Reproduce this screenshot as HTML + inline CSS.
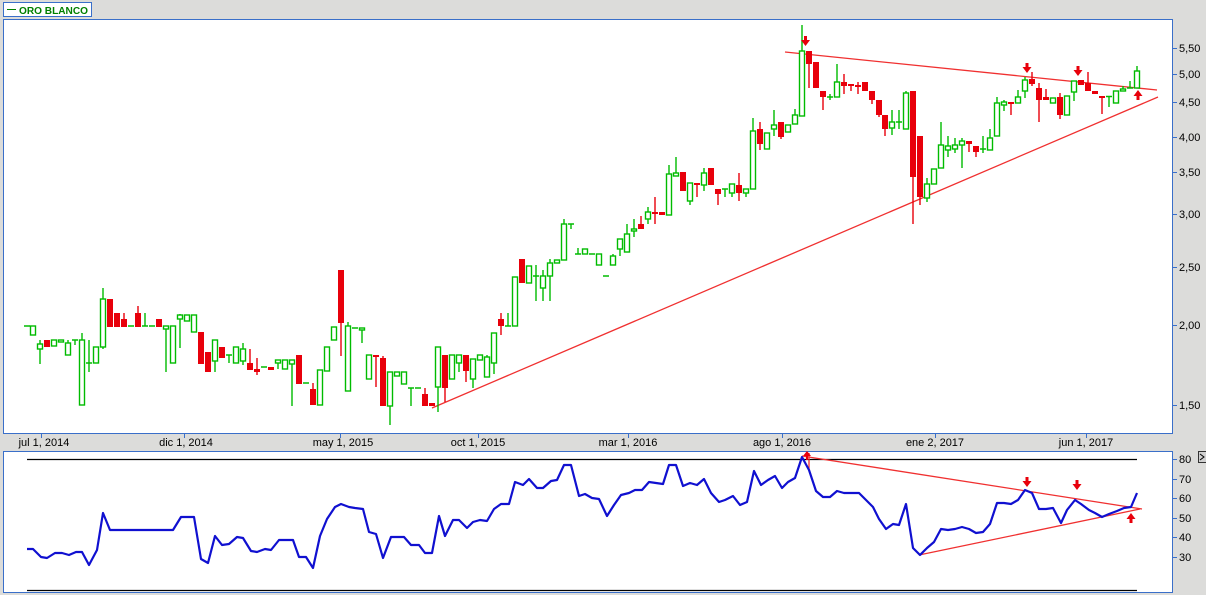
<!DOCTYPE html>
<html><head><meta charset="utf-8"><style>
html,body{margin:0;padding:0;background:#dcdcda;}
svg{display:block;font-family:"Liberation Sans",sans-serif;}
</style></head><body>
<svg width="1206" height="595" viewBox="0 0 1206 595" xmlns="http://www.w3.org/2000/svg">
<rect width="1206" height="595" fill="#dcdcda"/>
<!-- legend -->
<rect x="3.5" y="2.5" width="88" height="14" fill="#fff" stroke="#3a6fc9"/>
<line x1="7" y1="9.5" x2="16" y2="9.5" stroke="#008000" stroke-width="1"/>
<text x="19" y="14" font-size="10.5" font-weight="bold" fill="#008000" textLength="69" lengthAdjust="spacingAndGlyphs">ORO BLANCO</text>
<!-- main panel -->
<rect x="3.5" y="19.5" width="1169" height="414" fill="#fff" stroke="#3a6fc9"/>
<g stroke="#3a6fc9" stroke-width="1">
<path d="M1173 48.5h4M1173 74.5h4M1173 102.5h4M1173 137.5h4M1173 172.5h4M1173 214.5h4M1173 267.5h4M1173 325.5h4M1173 405.5h4"/>
<path d="M41.5 434v4M184.5 434v4M340.5 434v4M478.5 434v4M628.5 434v4M782.5 434v4M935.5 434v4M1086.5 434v4"/>
<path d="M1173 459.5h4M1173 479.5h4M1173 498.5h4M1173 518.5h4M1173 537.5h4M1173 557.5h4"/>
</g>
<g font-size="11" fill="#000">
<text x="1179" y="52">5,50</text><text x="1179" y="78">5,00</text><text x="1179" y="106">4,50</text>
<text x="1179" y="141">4,00</text><text x="1179" y="176">3,50</text><text x="1179" y="218">3,00</text>
<text x="1179" y="271">2,50</text><text x="1179" y="329">2,00</text><text x="1179" y="409">1,50</text>
<text x="1179" y="463">80</text><text x="1179" y="483">70</text><text x="1179" y="502">60</text>
<text x="1179" y="522">50</text><text x="1179" y="541">40</text><text x="1179" y="561">30</text>
<g text-anchor="middle">
<text x="44" y="446">jul 1, 2014</text><text x="186" y="446">dic 1, 2014</text><text x="343" y="446">may 1, 2015</text>
<text x="478" y="446">oct 1, 2015</text><text x="628" y="446">mar 1, 2016</text><text x="782" y="446">ago 1, 2016</text>
<text x="935" y="446">ene 2, 2017</text><text x="1086" y="446">jun 1, 2017</text>
</g></g>
<!-- trend lines -->
<g stroke="#f03030" stroke-width="1.3" fill="none">
<path d="M785 52L1157 90"/><path d="M432 408L1158 97"/>
</g>
<!-- green candles -->
<g stroke="#00bb00" stroke-width="1.4" fill="none">
<path d="M40 340V364M68 340V355M75 340V345M82 333V405M89 340V372M103 288V349M145 313V326M166 326V372M180 314V348M215 340V372M229 355V363M243 343V365M278 360V369M292 360V406M348 322V391M362 328V343M390 372V425M411 388V406M438 347V412M459 355V372M473 359V388M487 355V377M494 333V374M508 313V326M536 265V301M543 270V301M550 259V301M564 219V260M571 224V229M578 248V254M613 254V265M620 239V256M627 224V252M634 219V237M648 207V224M669 165V215M676 157V176M690 183V205M704 168V191M725 189V197M732 184V197M746 189V197M753 118V189M774 110V136M795 109V124M802 25V116M830 94V100M837 64V97M892 110V135M899 110V129M906 91V129M927 178V202M941 122V168M948 136V157M955 138V153M962 138V168M983 136V153M990 129V150M997 97V136M1004 100V111M1018 90V103M1025 77V98M1074 81V101M1109 96V107M1123 86V91M1130 81V88M1137 66V88"/>
<path d="M24 326h6M72 340h6M86 363h6M128 326h6M142 326h6M149 326h6M226 355h6M261 367h6M303 383h6M352 328h6M408 388h6M415 388h6M505 326h6M533 276h6M568 224h6M575 254h6M589 254h6M603 276h6M722 189h6M827 97h6M896 122h6M980 149h6M1106 96.5h6M1127 88h6"/>
</g>
<g stroke="#00bb00" stroke-width="1.4" fill="#fff">
<rect x="30.5" y="326" width="5" height="9"/><rect x="37.5" y="344" width="5" height="5"/><rect x="51.5" y="340" width="5" height="6"/><rect x="58.5" y="340" width="5" height="2"/><rect x="65.5" y="343" width="5" height="12"/><rect x="79.5" y="340" width="5" height="65"/><rect x="93.5" y="347" width="5" height="16"/><rect x="100.5" y="299" width="5" height="48"/><rect x="163.5" y="326" width="5" height="3"/><rect x="170.5" y="326" width="5" height="37"/><rect x="177.5" y="315" width="5" height="4"/><rect x="184.5" y="315" width="5" height="6"/><rect x="191.5" y="315" width="5" height="17"/><rect x="212.5" y="340" width="5" height="21"/><rect x="233.5" y="347" width="5" height="16"/><rect x="240.5" y="349" width="5" height="12"/><rect x="275.5" y="360" width="5" height="3"/><rect x="282.5" y="360" width="5" height="9"/><rect x="289.5" y="360" width="5" height="4"/><rect x="317.5" y="370" width="5" height="35"/><rect x="324.5" y="347" width="5" height="24"/><rect x="331.5" y="327" width="5" height="13"/><rect x="345.5" y="326" width="5" height="65"/><rect x="359.5" y="328" width="5" height="2"/><rect x="366.5" y="355" width="5" height="24"/><rect x="387.5" y="372" width="5" height="34"/><rect x="394.5" y="372" width="5" height="4"/><rect x="401.5" y="372" width="5" height="12"/><rect x="435.5" y="347" width="5" height="40"/><rect x="449.5" y="355" width="5" height="24"/><rect x="456.5" y="355" width="5" height="8"/><rect x="470.5" y="359" width="5" height="20"/><rect x="477.5" y="355" width="5" height="5"/><rect x="484.5" y="357" width="5" height="20"/><rect x="491.5" y="333" width="5" height="30"/><rect x="512.5" y="277" width="5" height="49"/><rect x="526.5" y="266" width="5" height="17"/><rect x="540.5" y="276" width="5" height="12"/><rect x="547.5" y="263" width="5" height="13"/><rect x="554.5" y="260" width="5" height="3"/><rect x="561.5" y="224" width="5" height="36"/><rect x="582.5" y="249" width="5" height="5"/><rect x="596.5" y="254" width="5" height="11"/><rect x="610.5" y="256" width="5" height="9"/><rect x="617.5" y="239" width="5" height="10"/><rect x="624.5" y="234" width="5" height="18"/><rect x="631.5" y="229" width="5" height="2"/><rect x="645.5" y="212" width="5" height="7"/><rect x="666.5" y="174" width="5" height="41"/><rect x="673.5" y="173" width="5" height="3"/><rect x="687.5" y="183" width="5" height="18"/><rect x="701.5" y="173" width="5" height="12"/><rect x="729.5" y="184" width="5" height="9"/><rect x="743.5" y="189" width="5" height="4"/><rect x="750.5" y="131" width="5" height="58"/><rect x="764.5" y="133" width="5" height="16"/><rect x="771.5" y="125" width="5" height="4"/><rect x="785.5" y="125" width="5" height="7"/><rect x="792.5" y="115" width="5" height="9"/><rect x="799.5" y="51" width="5" height="65"/><rect x="834.5" y="82" width="5" height="15"/><rect x="889.5" y="122" width="5" height="6"/><rect x="903.5" y="93" width="5" height="36"/><rect x="924.5" y="184" width="5" height="14"/><rect x="931.5" y="169" width="5" height="15"/><rect x="938.5" y="145" width="5" height="23"/><rect x="945.5" y="146" width="5" height="4"/><rect x="952.5" y="145" width="5" height="4"/><rect x="959.5" y="141" width="5" height="4"/><rect x="987.5" y="138" width="5" height="12"/><rect x="994.5" y="103" width="5" height="33"/><rect x="1001.5" y="102" width="5" height="3"/><rect x="1015.5" y="97" width="5" height="6"/><rect x="1022.5" y="80" width="5" height="11"/><rect x="1050.5" y="98" width="5" height="5"/><rect x="1064.5" y="96" width="5" height="19"/><rect x="1071.5" y="81" width="5" height="11"/><rect x="1113.5" y="91" width="5" height="12"/><rect x="1120.5" y="89" width="5" height="2"/><rect x="1134.5" y="71" width="5" height="17"/>
</g>
<!-- red candles -->
<g stroke="#e8000b" stroke-width="1.4" fill="none">
<path d="M124 313V319M138 306V313M250 349V363M257 358V375M313 383V389M341 323V356M376 356V387M383 356V358M425 388V394M445 388V402M466 371V382M501 313V335M641 216V224M655 197V224M697 185V197M718 194V205M739 173V201M760 122V150M781 137V139M809 64V88M823 97V110M844 74V94M851 86V91M858 82V94M872 100V104M879 115V117M885 129V136M913 177V224M920 197V205M969 144V152M976 152V157M1011 104V115M1032 72V86M1039 83V122M1046 89V97M1060 93V119M1088 72V83M1102 98V114"/>
</g>
<g fill="#e8000b">
<rect x="44" y="340" width="6" height="7"/><rect x="107" y="299" width="6" height="28"/><rect x="114" y="313" width="6" height="14"/><rect x="121" y="319" width="6" height="8"/><rect x="135" y="313" width="6" height="14"/><rect x="156" y="319" width="6" height="8"/><rect x="198" y="332" width="6" height="32"/><rect x="205" y="352" width="6" height="20"/><rect x="219" y="347" width="6" height="11"/><rect x="247" y="363" width="6" height="7"/><rect x="254" y="369" width="6" height="3"/><rect x="268" y="367" width="6" height="3"/><rect x="296" y="355" width="6" height="29"/><rect x="310" y="389" width="6" height="16"/><rect x="338" y="270" width="6" height="53"/><rect x="373" y="355" width="6" height="2"/><rect x="380" y="358" width="6" height="48"/><rect x="422" y="394" width="6" height="12"/><rect x="429" y="403" width="6" height="3"/><rect x="442" y="355" width="6" height="33"/><rect x="463" y="355" width="6" height="16"/><rect x="498" y="319" width="6" height="7"/><rect x="519" y="259" width="6" height="24"/><rect x="638" y="224" width="6" height="5"/><rect x="652" y="212" width="6" height="2"/><rect x="659" y="212" width="6" height="3"/><rect x="680" y="172" width="6" height="19"/><rect x="694" y="183" width="6" height="2"/><rect x="708" y="168" width="6" height="17"/><rect x="715" y="189" width="6" height="5"/><rect x="736" y="185" width="6" height="8"/><rect x="757" y="129" width="6" height="15"/><rect x="778" y="122" width="6" height="15"/><rect x="806" y="51" width="6" height="13"/><rect x="813" y="62" width="6" height="26"/><rect x="820" y="91" width="6" height="6"/><rect x="841" y="82" width="6" height="4"/><rect x="848" y="84" width="6" height="2"/><rect x="855" y="85" width="6" height="2"/><rect x="862" y="82" width="6" height="9"/><rect x="869" y="91" width="6" height="9"/><rect x="876" y="100" width="6" height="15"/><rect x="882" y="115" width="6" height="14"/><rect x="910" y="91" width="6" height="86"/><rect x="917" y="136" width="6" height="61"/><rect x="966" y="141" width="6" height="3"/><rect x="973" y="146" width="6" height="6"/><rect x="1008" y="102" width="6" height="2"/><rect x="1029" y="79" width="6" height="5"/><rect x="1036" y="88" width="6" height="12"/><rect x="1043" y="97" width="6" height="3"/><rect x="1057" y="97" width="6" height="18"/><rect x="1078" y="80" width="6" height="5"/><rect x="1085" y="83" width="6" height="8"/><rect x="1092" y="91" width="6" height="3"/><rect x="1099" y="96" width="6" height="2"/>
<polygon points="804,36 807,36 807,40 810,40 805.5,46 801,40 804,40"/>
<polygon points="1025.5,63 1028.5,63 1028.5,67 1031.5,67 1027,73 1022.5,67 1025.5,67"/>
<polygon points="1076.5,66 1079.5,66 1079.5,70 1082.5,70 1078,76 1073.5,70 1076.5,70"/>
<polygon points="1136.5,100 1139.5,100 1139.5,96 1142.5,96 1138,90 1133.5,96 1136.5,96"/>
</g>
<!-- RSI panel -->
<rect x="3.5" y="451.5" width="1169" height="141" fill="#fff" stroke="#3a6fc9"/>
<path d="M27 459.5H1137M27 590.5H1137" stroke="#000" stroke-width="1.2"/>
<g stroke="#f03030" stroke-width="1.3" fill="none">
<path d="M802 456L1142 509"/><path d="M919 555L1140 509"/><path d="M809 453V470"/>
</g>
<polyline fill="none" stroke="#1010d0" stroke-width="2.2" stroke-linejoin="round" points="27,549 33,549 41,557 47,558 55,553 62,553 69,555 76,552 82,552 89,565 97,550 103,513 110,530 173,530 181,517 194,517 201,559 208,563 215,536 222,545 229,544 237,537 243,538 251,551 257,552 265,549 271,550 279,540 293,540 299,557 306,557 313,568 320,536 327,519 335,507 341,504 349,507 355,508 363,509 369,532 376,534 383,558 391,537 404,537 411,545 419,545 425,553 432,553 439,516 445,536 453,520 459,520 467,528 473,522 480,520 487,521 494,509 501,504 509,504 515,482 523,485 529,479 537,488 543,488 551,481 557,480 564,465 571,465 579,496 585,494 592,498 599,499 607,516 614,505 621,495 629,493 635,490 642,490 649,482 656,483 663,484 669,465 676,465 683,486 690,483 697,485 704,479 711,493 719,502 725,500 733,496 740,505 747,502 754,471 761,485 768,480 775,476 782,488 788,482 795,478 802,457 809,470 816,491 823,497 830,497 837,491 844,493 859,493 865,499 873,507 879,519 886,529 893,524 899,525 906,504 913,548 920,555 927,548 934,542 941,529 948,530 955,529 962,527 969,529 976,533 983,532 990,524 997,503 1004,503 1011,504 1018,500 1025,490 1032,493 1039,509 1046,509 1053,508 1061,523 1067,510 1075,500 1081,504 1089,510 1095,513 1102,517 1109,514 1117,511 1124,508 1131,507 1137,493"/>
<g fill="#e8000b">
<polygon points="806,460 808,460 808,456 811,456 807,451 803,456 806,456"/>
<polygon points="1025.5,477 1028.5,477 1028.5,481 1031.5,481 1027,487 1022.5,481 1025.5,481"/>
<polygon points="1075.5,480 1078.5,480 1078.5,484 1081.5,484 1077,490 1072.5,484 1075.5,484"/>
<polygon points="1129.5,523 1132.5,523 1132.5,519 1135.5,519 1131,513 1126.5,519 1129.5,519"/>
</g>
<rect x="1198.5" y="451.5" width="8" height="11" fill="#d0d0d0" stroke="#333"/>
<path d="M1200 454l4 3l-4 3" stroke="#000" fill="none"/>
</svg>
</body></html>
